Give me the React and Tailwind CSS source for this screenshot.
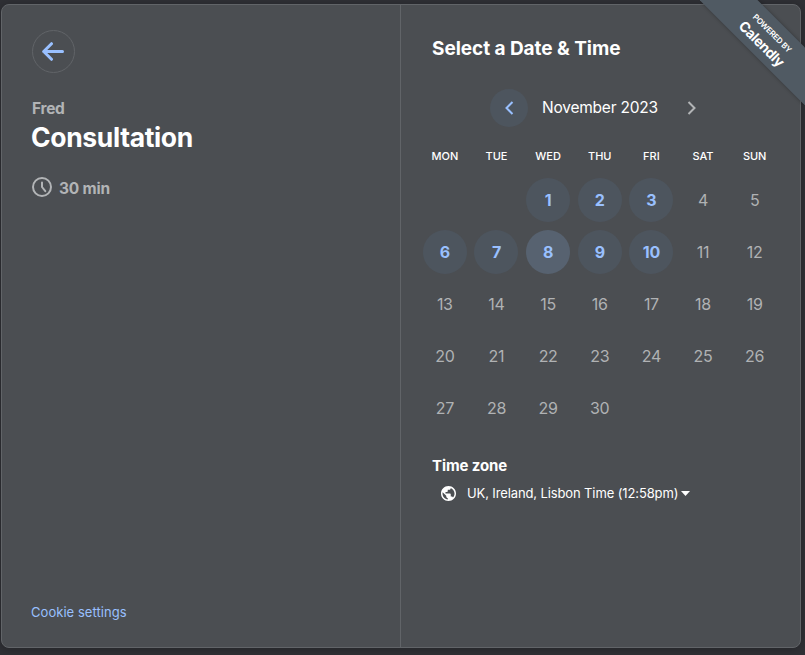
const WEEKDAYS = ['MON', 'TUE', 'WED', 'THU', 'FRI', 'SAT', 'SUN'];
const DAYS = Array.from({ length: 30 }, (_, i) => i + 1);
const AVAILABLE = [1, 2, 3, 6, 7, 8, 9, 10];

function Day({ day }) {
  const available = AVAILABLE.includes(day);
  let look = 'text-[#b0b2b4] tracking-[-0.3px]';
  if (available) look = 'bg-[#4d555e] font-bold text-[#99c0ff] tracking-[-0.3px]';
  if (day === 8) look = 'bg-[#576270] font-bold text-[#99c0ff]';
  return (
    <button className={`flex size-11 items-center justify-center rounded-full text-base leading-none ${look}`}>
      {day}
    </button>
  );
}

function Ribbon() {
  return (
    <div className="absolute top-0 right-0 size-[105px] overflow-hidden">
      <div className="absolute top-[18px] -left-[33px] flex h-[41px] w-[200px] rotate-45 flex-col items-center justify-center gap-[3px] bg-[#505a63] pt-0.5 text-white shadow-[0_0_4px_rgba(0,0,0,0.3)]">
        <span className="text-[8px] leading-[10px] font-semibold tracking-[-0.25px]">POWERED BY</span>
        <span className="text-[14px] leading-[14px] font-bold tracking-[-0.35px]">Calendly</span>
      </div>
    </div>
  );
}

export default function App() {
  return (
    <div className="relative h-[655px] w-[805px] overflow-hidden bg-[#2f3035] pt-1 pl-px font-['Inter','Liberation_Sans',sans-serif] text-white">
      <main className="flex h-[644px] w-[800px] overflow-hidden rounded-lg border border-[#616468] bg-[#4b4e52] shadow-[0_1px_8px_rgba(0,0,0,0.25)]">
        <section className="flex w-[399px] shrink-0 flex-col border-r border-[#616468] pt-[25px] pl-[30px]">
          <button aria-label="Back" className="flex size-[43px] items-center justify-center rounded-full border border-[#616468]">
            <svg width="22" height="19" viewBox="0 0 22 19" className="mr-px" fill="none" stroke="#99c0ff" strokeWidth="3" strokeLinecap="round" strokeLinejoin="round">
              <path d="M20.5 9.500H1.700M9.500 1.700L1.700 9.500L9.500 17.300" />
            </svg>
          </button>
          <p className="mt-[26px] text-[15.5px] leading-5 font-bold tracking-[-0.3px] text-[#b2b4b6]">Fred</p>
          <h1 className="mt-[2px] -ml-px text-[26.5px] leading-8 font-bold tracking-[-0.35px]">Consultation</h1>
          <div className="mt-6 flex items-center gap-[7px] text-[#b2b4b6]">
            <svg width="20" height="20" viewBox="0 0 20 20" className="mb-0.5" fill="none" stroke="currentColor" strokeWidth="2" strokeLinecap="round" strokeLinejoin="round">
              <circle cx="10" cy="10" r="9" />
              <path d="M10 5.600V10L13.300 14.200" />
            </svg>
            <span className="pt-px text-[15.500px] leading-5 font-bold tracking-[-0.2px]">30 min</span>
          </div>
          <a className="mt-auto mb-[25px] -ml-px text-[13px] leading-5 tracking-[0.05px] text-[#99c0ff]">Cookie settings</a>
        </section>

        <section className="flex flex-1 flex-col">
          <h2 className="mt-8 pl-[31px] text-[19px] leading-6 font-bold tracking-[-0.05px]">Select a Date &amp; Time</h2>
          <div className="mt-7 flex h-[38px] items-center pl-[89px]">
            <button aria-label="Previous month" className="flex size-[38px] items-center justify-center rounded-full bg-[#4d555e]">
              <svg width="9" height="14" viewBox="0 0 9 14" fill="none" stroke="#99c0ff" strokeWidth="2">
                <path d="M7.500 1L1.500 7L7.500 13" />
              </svg>
            </button>
            <span className="ml-3.5 w-[116px] pb-px text-[15.500px] leading-5 tracking-[-0.22px] whitespace-nowrap">November 2023</span>
            <button aria-label="Next month" className="ml-[29px]">
              <svg width="9" height="14" viewBox="0 0 9 14" fill="none" stroke="#b2b4b6" strokeWidth="2">
                <path d="M1.500 1L7.500 7L1.500 13" />
              </svg>
            </button>
          </div>

          <div className="mt-[22px] ml-[18px] grid w-[361.5px] grid-cols-7 justify-items-center text-[11px] leading-[14px] font-medium">
            {WEEKDAYS.map((d) => <span key={d}>{d}</span>)}
          </div>
          <div className="mt-[15px] ml-[18px] grid w-[361.5px] grid-cols-7 justify-items-center gap-y-2">
            <span className="col-span-2" />
            {DAYS.map((d) => <Day key={d} day={d} />)}
          </div>

          <h3 className="mt-[26px] pl-[31px] text-[15px] leading-5 font-bold tracking-[-0.1px]">Time zone</h3>
          <div className="mt-[7px] flex items-center pl-10">
            <svg width="15" height="15" viewBox="2 2 20 20" fill="white">
              <path d="M12 2C6.480 2 2 6.480 2 12s4.480 10 10 10 10-4.480 10-10S17.520 2 12 2zm-1 17.930c-3.950-.49-7-3.850-7-7.930 0-.62.080-1.210.21-1.790L9 15v1c0 1.100.9 2 2 2v1.930zm6.900-2.540c-.26-.81-1-1.390-1.900-1.390h-1v-3c0-.55-.45-1-1-1H8v-2h2c.55 0 1-.45 1-1V7h2c1.100 0 2-.9 2-2v-.41c2.930 1.190 5 4.060 5 7.410 0 2.080-.8 3.970-2.100 5.390z" />
            </svg>
            <span className="ml-[11px] w-[212px] text-[13px] leading-5 tracking-[-0.12px] whitespace-nowrap">UK, Ireland, Lisbon Time (12:58pm)</span>
            <svg width="9" height="5" viewBox="0 0 9 5" className="ml-0.5" fill="white">
              <path d="M0 0H9L4.500 5Z" />
            </svg>
          </div>
        </section>
      </main>
      <Ribbon />
    </div>
  );
}
